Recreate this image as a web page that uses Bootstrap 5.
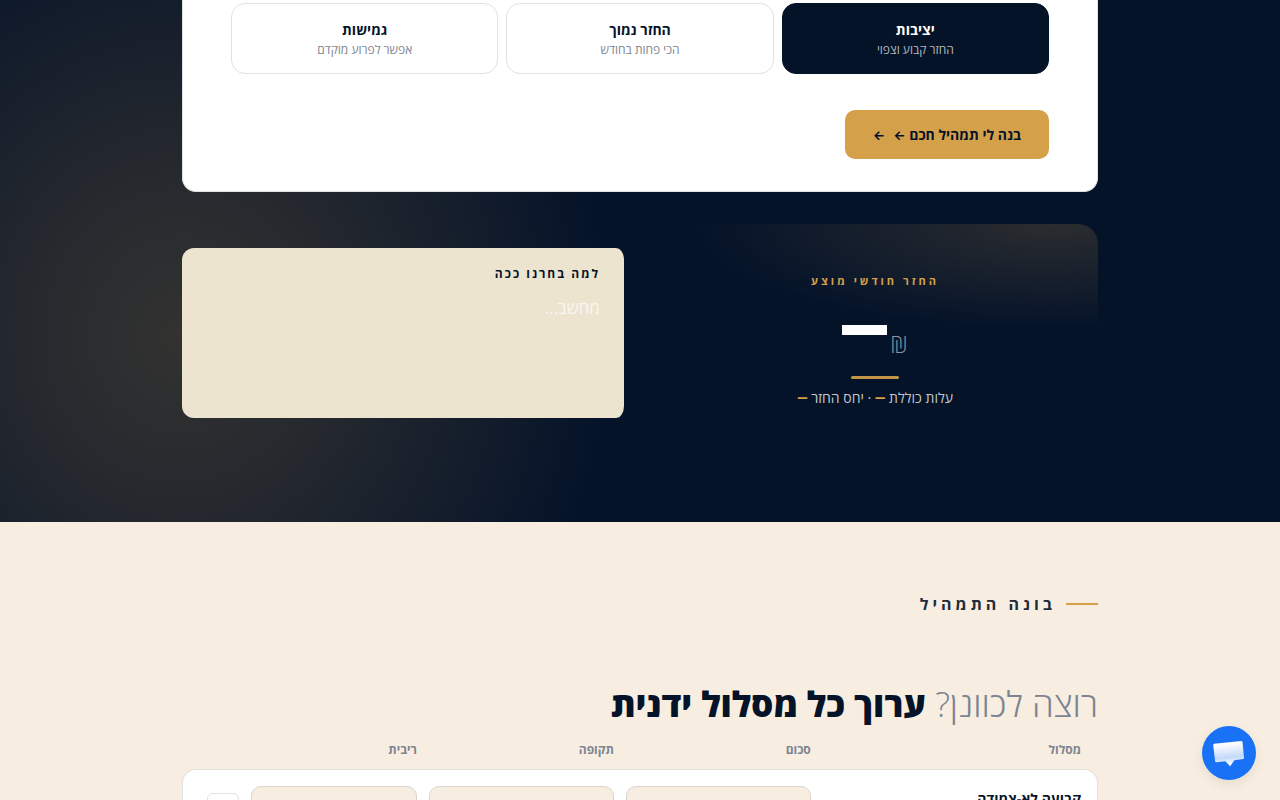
<!DOCTYPE html>
<html lang="he" dir="rtl">
<head>
<meta charset="utf-8">
<meta name="viewport" content="width=device-width, initial-scale=1">
<title>בונה התמהיל</title>
<link href="https://cdn.jsdelivr.net/npm/bootstrap@5.3.0/dist/css/bootstrap.min.css" rel="stylesheet">
<style>
:root { --navy: #051329; --gold: #d4a04a; --cream: #f7eee1; --muted: #7d8491; --hairline: #e0e1e3; }
body { font-family: "Open Sans", sans-serif; background: var(--cream); color: var(--navy); line-height: 20px; }
.wrap { width: 100%; max-width: 980px; margin: 0 auto; padding: 0 32px; }
.hero { background: radial-gradient(ellipse 430px 470px at 180px 335px, rgba(212,160,74,.22), rgba(212,160,74,.15) 40%, rgba(212,160,74,0)), var(--navy); padding-bottom: 80px; }
.planner { background: #fff; border: 1px solid var(--hairline); border-top: 0; border-radius: 0 0 14px 14px; padding: 3px 48px 32px; margin-bottom: 32px; }
.choice { background: #fff; border: 1px solid var(--hairline); border-radius: 14px; padding: 16px 12px; height: 71px; color: var(--navy); }
.choice.on { background: var(--navy); border-color: var(--navy); color: #fff; }
.choice b, .choice span { display: block; line-height: 20px; }
.choice b { font-size: 14px; }
.choice span { font-size: 12px; color: var(--muted); }
.choice.on span { color: #b4b8bf; }
.build { background: var(--gold); color: var(--navy); border: 0; border-radius: 10px; height: 49px; padding: 0 28px; font-size: 14px; font-weight: 700; margin-top: 36px; }
.arrow { font-family: Inter, sans-serif; font-size: 13px; }
.result { background: radial-gradient(ellipse 80% 48% at 90% 0, rgba(212,160,74,.18), rgba(212,160,74,0)), var(--navy); border-radius: 20px; height: 218px; padding-top: 46px; }
.result h3 { font-size: 11px; line-height: 22px; letter-spacing: 3px; font-weight: 700; color: var(--gold); margin: 0; }
.amount { font-weight: 300; color: #8f96a1; height: 60px; margin-top: 10px; gap: 3px; }
.amount span { font-size: 24px; line-height: 32px; padding-top: 26px; }
.dash { width: 45px; height: 10px; background: #fff; margin-top: 23px; }
.rule { width: 48px; height: 3px; border-radius: 2px; background: #c29446; margin: 14px auto 9px; }
.total { font-size: 14px; line-height: 20px; color: #c3c7cc; margin: 0; }
.total b { font-family: Roboto, sans-serif; color: var(--gold); }
.why { background: #ece4cf; border-right: 4px solid var(--navy); border-radius: 12px; height: 170px; padding: 16px 24px; }
.why h3 { font-size: 12px; line-height: 20px; letter-spacing: 2px; font-weight: 700; margin: 0 0 12px; }
.why p { font-size: 17px; line-height: 24px; color: #faf7f0; margin: 0; }
.eyebrow { font-size: 16px; line-height: 24px; font-weight: 700; letter-spacing: 4px; color: #212b3a; padding-top: 70px; gap: 10px; margin: 0 0 60px; }
.eyebrow i { width: 32px; height: 2px; background: var(--gold); }
.heading { font-size: 35px; line-height: 56px; font-weight: 800; margin: 0; }
.heading span { font-weight: 300; color: var(--muted); }
.tracks { width: 100%; table-layout: fixed; border-collapse: separate; border-spacing: 0; }
.tracks th { font-size: 12px; line-height: 20px; font-weight: 700; color: var(--muted); padding: 8px 6px 9px; text-align: right; }
.tracks tr > :first-child { padding-right: 17px; }
.tracks td { background: #fff; border: solid var(--hairline); border-width: 1px 0; padding: 16px 6px; vertical-align: top; }
.tracks td:first-child { border-right-width: 1px; border-radius: 0 14px 14px 0; padding-top: 19px; padding-right: 16px; font-size: 14px; font-weight: 700; }
.tracks td:last-child { border-left-width: 1px; border-radius: 14px 0 0 14px; padding-top: 23px; }
.field { display: block; width: 100%; height: 46px; border: 1px solid #d9d5cd; border-radius: 10px; background: var(--cream); padding: 0 12px; }
.remove { display: block; width: 32px; height: 32px; border: 1px solid var(--hairline); border-radius: 6px; background: #fff; }
.chat { right: 24px; bottom: 20px; width: 54px; height: 54px; border: 0; border-radius: 50%; background: #1972f5; padding: 0; box-shadow: 0 4px 12px rgba(0,0,0,.08); }
.chat svg { display: block; }
</style>
</head>
<body>
<section class="hero">
  <div class="wrap">
    <form class="planner">
      <div class="row row-cols-3 gx-2">
        <div class="col"><button type="button" class="choice on w-100"><b>יציבות</b><span>החזר קבוע וצפוי</span></button></div>
        <div class="col"><button type="button" class="choice w-100"><b>החזר נמוך</b><span>הכי פחות בחודש</span></button></div>
        <div class="col"><button type="button" class="choice w-100"><b>גמישות</b><span>אפשר לפרוע מוקדם</span></button></div>
      </div>
      <button type="button" class="build d-flex align-items-center gap-2"><span>בנה לי תמהיל חכם <span class="arrow">←</span></span><span class="arrow">←</span></button>
    </form>
    <div class="row gx-4 align-items-center">
      <div class="col-6">
        <div class="result text-center">
          <h3>החזר חודשי מוצע</h3>
          <div class="amount d-flex justify-content-center"><span>₪</span><div class="dash"></div></div>
          <div class="rule"></div>
          <p class="total">עלות כוללת <b>—</b> · יחס החזר <b>—</b></p>
        </div>
      </div>
      <div class="col-6">
        <div class="why">
          <h3>למה בחרנו ככה</h3>
          <p>מחשב...</p>
        </div>
      </div>
    </div>
  </div>
</section>
<section class="wrap">
  <p class="eyebrow d-flex align-items-center"><i></i>בונה התמהיל</p>
  <h2 class="heading"><span>רוצה לכוונן?</span> ערוך כל מסלול ידנית</h2>
  <table class="tracks">
    <colgroup><col style="width:30.7%"><col style="width:21.5%"><col style="width:21.5%"><col style="width:19.4%"><col></colgroup>
    <thead><tr><th>מסלול</th><th id="sum">סכום</th><th id="term">תקופה</th><th id="rate">ריבית</th><th></th></tr></thead>
    <tbody><tr>
      <td>קבועה לא-צמודה</td>
      <td><input class="field" type="text" aria-labelledby="sum"></td>
      <td><input class="field" type="text" aria-labelledby="term"></td>
      <td><input class="field" type="text" aria-labelledby="rate"></td>
      <td><button type="button" class="remove" aria-label="הסר"></button></td>
    </tr></tbody>
  </table>
</section>
<button type="button" class="chat position-fixed" aria-label="צ׳אט">
  <svg width="54" height="54" viewBox="0 0 54 54"><defs><linearGradient id="g" x1="0.42" y1="0" x2="0.55" y2="1"><stop offset="0" stop-color="#fff"/><stop offset=".2" stop-color="#f6f9fe"/><stop offset=".65" stop-color="#c3d8fb"/><stop offset=".85" stop-color="#eef4fe"/><stop offset="1" stop-color="#fff"/></linearGradient></defs>
  <path d="M12.300 17.800L39.300 15Q40.300 15 40.500 16L42 31.800Q42 32.900 41 33.100L32.300 34.200L28.200 40.300L23.300 35.300L14.300 36.200Q13.300 36.200 13.100 35.200L11.200 19Q11.200 18 12.300 17.800Z" fill="url(#g)"/></svg>
</button>
<script src="https://cdn.jsdelivr.net/npm/bootstrap@5.3.0/dist/js/bootstrap.bundle.min.js"></script>
</body>
</html>
